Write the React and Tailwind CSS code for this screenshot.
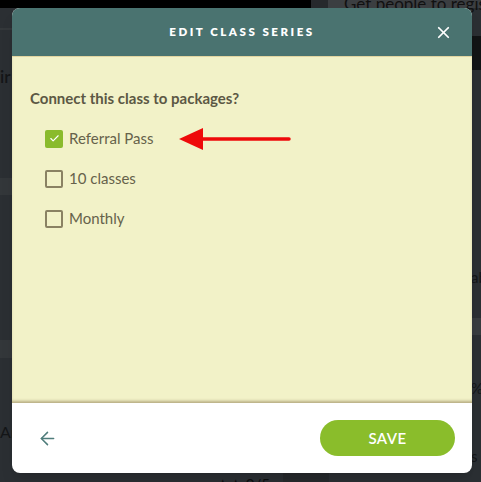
import { X, ArrowLeft, Check } from "lucide-react";

const packages = [
  { name: "Referral Pass", checked: true },
  { name: "10 classes", checked: false },
  { name: "Monthly", checked: false },
];

const Backdrop = () => (
  <div className="absolute inset-0 overflow-hidden whitespace-nowrap bg-[#2b2f33] text-[#141618] font-['Lato',sans-serif]">
    <div className="flex h-[8px]">
      <div className="w-[311px] bg-black" />
      <div className="w-[17px] bg-[#26292c]" />
      <div className="flex-1 bg-[#3b3e41]" />
    </div>
    <div className="absolute left-[344px] top-[-9px] text-[17px] text-[#111]">Get people to register</div>
    <div className="absolute left-[472px] top-[36px] h-[34px] w-[9px] bg-[#121415]" />
    <div className="absolute left-0 top-[28px] h-[2px] w-[12px] bg-[#34383b]" />
    <div className="absolute left-0 top-[64px] text-[17px] font-semibold">ir</div>
    <div className="absolute left-0 top-[178px] h-[17px] w-[12px] bg-[#33373a]" />
    <div className="absolute left-0 top-[340px] h-[18px] w-[12px] bg-[#33373a]" />
    <div className="absolute left-0 top-[420px] text-[16px]">Ar</div>
    <div className="absolute left-[472px] top-[318px] h-[17px] w-[9px] bg-[#383c3f]" />
    <div className="absolute left-[471px] top-[266px] text-[15px]">ab</div>
    <div className="absolute left-[471px] top-[377px] text-[15px]">%</div>
    <div className="absolute left-[471px] top-[445px] text-[15px]">s</div>
    <div className="absolute left-[216px] top-[473px] text-[15px] text-[#0c0d0e]">★★ 0/5</div>
    <div className="absolute left-[283px] top-[473px] h-[9px] w-[46px] bg-[#26292c]" />
  </div>
);

const RedArrow = () => (
  <svg width="116" height="26" viewBox="0 0 116 26" className="ml-[23px]">
    <path d="M26 13 H112" stroke="#ee0a0a" strokeWidth="3.5" strokeLinecap="round" />
    <path d="M2 13 L26 2 L26 24 Z" fill="#ee0a0a" />
  </svg>
);

export default function App() {
  return (
    <div className="relative h-[482px] w-[481px] overflow-hidden font-['Lato',sans-serif]">
      <Backdrop />
      <div className="relative ml-[12px] mt-[8px] flex h-[465px] w-[460px] flex-col overflow-hidden rounded-[8px] bg-white shadow-lg">
        <div className="relative flex h-[48px] shrink-0 items-center justify-center bg-[#4a7370]">
          <span className="text-[11.5px] font-extrabold tracking-[0.22em] text-white">EDIT CLASS SERIES</span>
          <X className="absolute right-[19px] top-[15px] text-white" size={19} strokeWidth={2.2} />
        </div>
        <div className="flex-1 border-t border-[#e2d5a0] bg-[#f2f2c8] px-[18px] pt-[30px] shadow-[inset_0_-3px_3px_-1px_#b7ac82]">
          <div className="text-[15px] font-bold text-[#5c5844]">Connect this class to packages?</div>
          <div className="mt-[20px] flex flex-col gap-[22px] pl-[15px]">
            {packages.map((p) => (
              <label key={p.name} className="flex h-[18px] items-center">
                {p.checked ? (
                  <span className="flex h-[18px] w-[18px] items-center justify-center rounded-[2px] bg-[#8abb2c]">
                    <Check size={11} strokeWidth={2.5} className="text-white" />
                  </span>
                ) : (
                  <span className="h-[18px] w-[18px] rounded-[2px] border-2 border-[#8a8263] bg-[#f2f2c8]" />
                )}
                <span className="ml-[6px] text-[15px] text-[#66624b]">{p.name}</span>
                {p.checked && <RedArrow />}
              </label>
            ))}
          </div>
        </div>
        <div className="flex h-[70px] shrink-0 items-center justify-between pl-[25px] pr-[17px]">
          <ArrowLeft size={21} strokeWidth={1.75} className="text-[#4f7d7b]" />
          <button className="flex h-[36px] w-[135px] items-center justify-center rounded-full bg-[#8abd2b] text-[15px] font-semibold tracking-[0.03em] text-white">
            SAVE
          </button>
        </div>
      </div>
    </div>
  );
}
